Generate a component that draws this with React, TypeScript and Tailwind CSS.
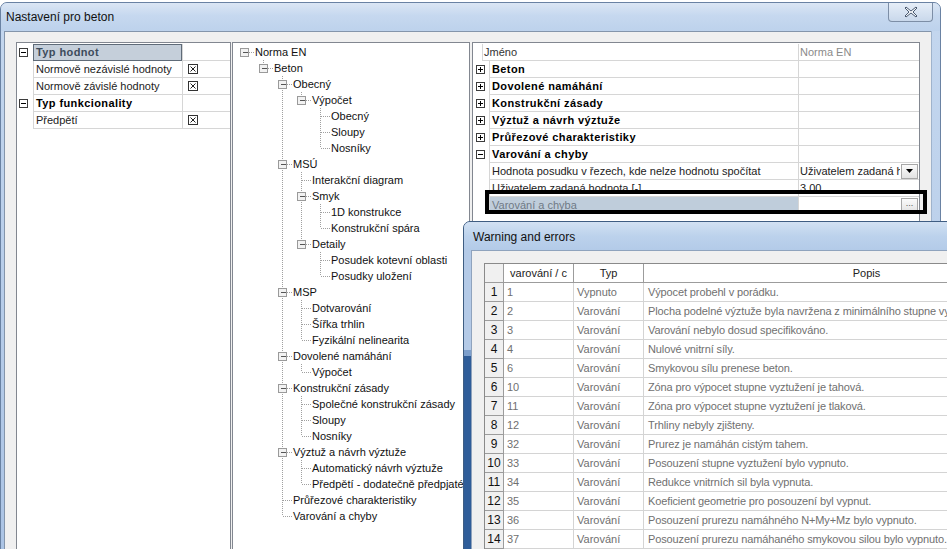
import React from "react";

type TNode = { label: string; children?: TNode[] };

const tree: TNode = {
  label: "Norma EN",
  children: [
    {
      label: "Beton",
      children: [
        {
          label: "Obecný",
          children: [{ label: "Výpočet", children: [{ label: "Obecný" }, { label: "Sloupy" }, { label: "Nosníky" }] }],
        },
        {
          label: "MSÚ",
          children: [
            { label: "Interakční diagram" },
            { label: "Smyk", children: [{ label: "1D konstrukce" }, { label: "Konstrukční spára" }] },
            { label: "Detaily", children: [{ label: "Posudek kotevní oblasti" }, { label: "Posudky uložení" }] },
          ],
        },
        {
          label: "MSP",
          children: [{ label: "Dotvarování" }, { label: "Šířka trhlin" }, { label: "Fyzikální nelinearita" }],
        },
        { label: "Dovolené namáhání", children: [{ label: "Výpočet" }] },
        {
          label: "Konstrukční zásady",
          children: [{ label: "Společné konstrukční zásady" }, { label: "Sloupy" }, { label: "Nosníky" }],
        },
        {
          label: "Výztuž a návrh výztuže",
          children: [{ label: "Automatický návrh výztuže" }, { label: "Předpětí - dodatečně předpjaté" }],
        },
        { label: "Průřezové charakteristiky" },
        { label: "Varování a chyby" },
      ],
    },
  ],
};

type Flat = { label: string; level: number; hasKids: boolean; last: boolean; rails: boolean[] };

function flatten(n: TNode, level: number, last: boolean, rails: boolean[], out: Flat[]) {
  const kids = n.children ?? [];
  out.push({ label: n.label, level, hasKids: kids.length > 0, last, rails });
  kids.forEach((k, i) => flatten(k, level + 1, i === kids.length - 1, [...rails, !last], out));
  return out;
}

const rows = flatten(tree, 0, true, [], []);

const warnings = [
  ["1", "Vypnuto", "Výpocet probehl v porádku."],
  ["2", "Varování", "Plocha podelné výztuže byla navržena z minimálního stupne vyztužení."],
  ["3", "Varování", "Varování nebylo dosud specifikováno."],
  ["4", "Varování", "Nulové vnitrní síly."],
  ["6", "Varování", "Smykovou sílu prenese beton."],
  ["10", "Varování", "Zóna pro výpocet stupne vyztužení je tahová."],
  ["11", "Varování", "Zóna pro výpocet stupne vyztužení je tlaková."],
  ["12", "Varování", "Trhliny nebyly zjišteny."],
  ["32", "Varování", "Prurez je namáhán cistým tahem."],
  ["33", "Varování", "Posouzení stupne vyztužení bylo vypnuto."],
  ["34", "Varování", "Redukce vnitrních sil byla vypnuta."],
  ["35", "Varování", "Koeficient geometrie pro posouzení byl vypnut."],
  ["36", "Varování", "Posouzení prurezu namáhného N+My+Mz bylo vypnuto."],
  ["37", "Varování", "Posouzení prurezu namáhaného smykovou silou bylo vypnuto."],
];

const groups = [
  "Beton",
  "Dovolené namáhání",
  "Konstrukční zásady",
  "Výztuž a návrh výztuže",
  "Průřezové charakteristiky",
];

function PM({ plus }: { plus?: boolean }) {
  return (
    <svg width="9" height="9" shapeRendering="crispEdges" className="shrink-0">
      <rect x="0.5" y="0.5" width="8" height="8" fill="#fff" stroke="#3c3c3c" />
      <line x1="2" y1="4.5" x2="7" y2="4.5" stroke="#000" />
      {plus && <line x1="4.5" y1="2" x2="4.5" y2="7" stroke="#000" />}
    </svg>
  );
}

function Check() {
  return (
    <svg width="10" height="10" shapeRendering="crispEdges">
      <rect x="0.5" y="0.5" width="9" height="9" fill="#fff" stroke="#333" />
      <path d="M2.5 2.5 L7.5 7.5 M7.5 2.5 L2.5 7.5" stroke="#222" shapeRendering="auto" />
    </svg>
  );
}

function Connector({ row }: { row: Flat }) {
  const W = 19;
  const w = W * (row.level + 1);
  const c = row.level * W + 9;
  const dot = { stroke: "#a0a0a0", strokeDasharray: "1 1" };
  return (
    <svg width={w} height={16} shapeRendering="crispEdges" className="shrink-0">
      {row.rails.map((r, k) =>
        r && k > 0 ? <line key={k} x1={k * W + 9.5} y1={0} x2={k * W + 9.5} y2={16} {...dot} /> : null
      )}
      {row.level > 0 && <line x1={c + 0.5} y1={0} x2={c + 0.5} y2={row.last ? 8 : 16} {...dot} />}
      <line x1={c + 1} y1={8.5} x2={w + 1} y2={8.5} {...dot} />
      {row.hasKids && (
        <g>
          <rect x={c - 3.5} y={4.5} width={8} height={8} fill="#f2f2f2" stroke="#9a9a9a" />
          <line x1={c - 1} y1={8.5} x2={c + 4} y2={8.5} stroke="#555" />
        </g>
      )}
    </svg>
  );
}

function MiniBtn({ children }: { children: React.ReactNode }) {
  return (
    <div className="ml-auto mr-[1px] w-[17px] h-[15px] shrink-0 flex items-center justify-center border border-[#a7a7a7] bg-[linear-gradient(to_bottom,#fbfbfb,#e2e2e2)]">
      {children}
    </div>
  );
}

export default function App() {
  return (
    <div className="relative w-[947px] h-[549px] overflow-hidden bg-white font-['Liberation_Sans',Arial,sans-serif] text-[11px] text-black">
      {/* main window */}
      <div className="mt-[2px] w-[941px] h-[600px] flex flex-col rounded-t-[7px] border border-[#6a82a3] bg-[#bcd1ec]">
        <div className="h-[28px] shrink-0 flex items-start justify-between rounded-t-[6px] bg-[linear-gradient(to_bottom,#dbe6f4,#c6d8ef_45%,#bdd2ec)]">
          <span className="ml-[5px] mt-[6px] text-[12px] leading-[16px] text-[#111]">Nastavení pro beton</span>
          <div className="mr-[7px] w-[45px] h-[19px] rounded-b-[4px] border border-t-0 border-[#7d8ea6] bg-[linear-gradient(to_bottom,#e6eef8,#c9d8eb)] flex items-center justify-center">
            <svg width="14" height="12" viewBox="0 0 14 12">
              <path d="M2 1 L7 5 L12 1 L13 2 L9 6 L13 10 L12 11 L7 7 L2 11 L1 10 L5 6 L1 2 Z" fill="#f4f6f9" stroke="#4a5a70" strokeWidth="1" strokeLinejoin="round" />
            </svg>
          </div>
        </div>
        <div className="flex flex-1">
          <div className="w-[3px] shrink-0 bg-[linear-gradient(to_bottom,#c3d6ee,#a9c2e4)]" />
          <div className="w-[927px] shrink-0 bg-[#f0f0f0] border-l border-t border-[#8495ab] pt-[10px] pl-[11px] flex items-start">
            {/* panel 1 */}
            <div className="w-[215px] h-[520px] shrink-0 bg-white border border-[#828790] pt-[1px]">
              {[
                { box: true, label: "Typ hodnot", bold: true, sel: true },
                { label: "Normově nezávislé hodnoty", check: true },
                { label: "Normově závislé hodnoty", check: true },
                { box: true, label: "Typ funkcionality", bold: true },
                { label: "Předpětí", check: true },
              ].map((r, i) => (
                <div key={i} className="flex h-[17px]">
                  <div className="w-[16px] shrink-0 flex items-center pl-[2px]">{r.box && <PM />}</div>
                  <div
                    className={
                      r.sel
                        ? "w-[149px] shrink-0 border border-[#5f6b78] bg-[#c5cfda] pl-[2px] flex items-center font-bold tracking-[0.4px] text-[#3d4c5c]"
                        : r.bold
                        ? "w-[149px] shrink-0 border-l border-b border-[#d6d6d6] pl-[2px] flex items-center font-bold tracking-[0.4px]"
                        : "w-[149px] shrink-0 border-l border-b border-[#d6d6d6] pl-[2px] flex items-center text-[#222]"
                    }
                  >
                    {r.label}
                  </div>
                  <div className="w-[48px] shrink-0 border-l border-b border-[#d6d6d6] pl-[5px] flex items-center">
                    {r.check && <Check />}
                  </div>
                </div>
              ))}
            </div>

            {/* panel 2 - tree */}
            <div className="ml-[1px] w-[238px] h-[520px] shrink-0 bg-white border border-[#828790] pt-[1px] pl-[2px] overflow-hidden">
              {rows.map((r, i) => (
                <div key={i} className="flex items-center h-[16px] whitespace-nowrap">
                  <Connector row={r} />
                  <span className="ml-[1px] leading-[16px] text-[#111]">{r.label}</span>
                </div>
              ))}
            </div>

            {/* panel 3 - property grid */}
            <div className="ml-[2px] w-[448px] h-[520px] shrink-0 bg-white border border-[#828790] pt-[1px]">
              <div className="flex h-[17px]">
                <div className="w-[9px] shrink-0" />
                <div className="w-[316px] shrink-0 border-l border-b border-[#d6d6d6] pl-[1px] flex items-center text-[#333]">Jméno</div>
                <div className="w-[121px] shrink-0 border-l border-b border-[#d6d6d6] pl-[1px] flex items-center text-[#8a8a8a]">Norma EN</div>
              </div>
              {groups.map((g) => (
                <div key={g} className="flex h-[17px]">
                  <div className="w-[16px] shrink-0 flex items-center pl-[3px]"><PM plus /></div>
                  <div className="w-[309px] shrink-0 border-l border-b border-[#d6d6d6] pl-[2px] flex items-center font-bold tracking-[0.4px]">{g}</div>
                  <div className="w-[121px] shrink-0 border-l border-b border-[#d6d6d6]" />
                </div>
              ))}
              <div className="flex h-[17px]">
                <div className="w-[16px] shrink-0 flex items-center pl-[3px]"><PM /></div>
                <div className="w-[309px] shrink-0 border-l border-b border-[#d6d6d6] pl-[2px] flex items-center font-bold tracking-[0.4px]">Varování a chyby</div>
                <div className="w-[121px] shrink-0 border-l border-b border-[#d6d6d6]" />
              </div>
              <div className="flex h-[17px]">
                <div className="w-[16px] shrink-0" />
                <div className="w-[309px] shrink-0 border-l border-b border-[#d6d6d6] pl-[2px] flex items-center text-[#222]">Hodnota posudku v řezech, kde nelze hodnotu spočítat</div>
                <div className="w-[121px] shrink-0 border-l border-b border-[#d6d6d6] pl-[1px] flex items-center overflow-hidden whitespace-nowrap">
                  <span className="w-[100px] overflow-hidden text-[#222]">Uživatelem zadaná hodnota</span>
                  <MiniBtn>
                    <svg width="7" height="4" viewBox="0 0 7 4"><path d="M0 0 H7 L3.5 4 Z" fill="#000" /></svg>
                  </MiniBtn>
                </div>
              </div>
              <div className="flex h-[17px]">
                <div className="w-[16px] shrink-0" />
                <div className="w-[309px] shrink-0 border-l border-b border-[#d6d6d6] pl-[2px] flex items-center text-[#222]">Uživatelem zadaná hodnota [-]</div>
                <div className="w-[121px] shrink-0 border-l border-b border-[#d6d6d6] pl-[1px] flex items-center text-[#222]">3.00</div>
              </div>
              <div className="flex h-[17px]">
                <div className="w-[16px] shrink-0" />
                <div className="w-[309px] shrink-0 border-l border-b border-[#d6d6d6] bg-[#bfcddb] pl-[2px] flex items-center text-[#6f7a86]">Varování a chyba</div>
                <div className="w-[121px] shrink-0 border-l border-b border-[#d6d6d6] flex items-center">
                  <MiniBtn>
                    <span className="text-[9px] leading-none text-[#555] -mt-[3px]">...</span>
                  </MiniBtn>
                </div>
              </div>
            </div>
          </div>
          <div className="w-[9px] shrink-0 bg-[linear-gradient(to_bottom,#c3d6ee,#b2c9e7)] border-l border-[#9fb3cc]" />
        </div>
      </div>

      {/* highlight frame */}
      <div className="absolute left-[485px] top-[190px] w-[442px] h-[24px] border-4 border-black" />

      {/* Warning and errors dialog */}
      <div className="absolute left-[463px] top-[221px] w-[520px] h-[340px] flex flex-col rounded-tl-[7px] border border-[#3f5d82] bg-[#b8cde9] overflow-hidden">
        <div className="h-[28px] shrink-0 pl-[9px] pt-[8px] text-[12px] leading-[15px] text-[#111] bg-[linear-gradient(to_bottom,#d2e1f3,#bcd2ec_50%,#b3cbe8)]">
          Warning and errors
        </div>
        <div className="flex flex-1">
          <div className="w-[7px] shrink-0 flex flex-col">
            <div className="h-[100px] bg-[#b4cae7]" />
            <div className="h-[6px] bg-[#7d9fcc]" />
            <div className="flex-1 bg-[#2f5d99]" />
          </div>
          <div className="flex-1 min-w-0 bg-[#f0f0f0] border-l border-t border-[#8fa3bd] pt-[12px] pl-[12px] overflow-hidden">
            <div className="w-[620px] border-l border-t border-[#8a8a8a] bg-white">
              <div className="flex h-[19px]">
                <div className="w-[19px] shrink-0 bg-[#f0f0f0] border-r border-b border-[#9c9c9c]" />
                <div className="w-[70px] shrink-0 border-r border-b border-[#9c9c9c] flex items-center justify-center text-[#222]">varování / c</div>
                <div className="w-[70px] shrink-0 border-r border-b border-[#9c9c9c] flex items-center justify-center text-[#222]">Typ</div>
                <div className="w-[446px] shrink-0 border-r border-b border-[#9c9c9c] flex items-center justify-center text-[#222]">Popis</div>
              </div>
              {warnings.map(([v, t, p], i) => (
                <div key={i} className="flex h-[19px]">
                  <div className="w-[19px] shrink-0 bg-[#f0f0f0] border-r border-b border-[#9c9c9c] flex items-center justify-center text-[12px] text-[#111]">{i + 1}</div>
                  <div className="w-[70px] shrink-0 border-r border-b border-[#d4d4d4] pl-[3px] flex items-center text-[#707070]">{v}</div>
                  <div className="w-[70px] shrink-0 border-r border-b border-[#d4d4d4] pl-[3px] flex items-center text-[#707070]">{t}</div>
                  <div className="w-[446px] shrink-0 border-r border-b border-[#d4d4d4] pl-[4px] flex items-center text-[#707070] tracking-[-0.12px] whitespace-nowrap overflow-hidden">{p}</div>
                </div>
              ))}
            </div>
          </div>
        </div>
      </div>
    </div>
  );
}
